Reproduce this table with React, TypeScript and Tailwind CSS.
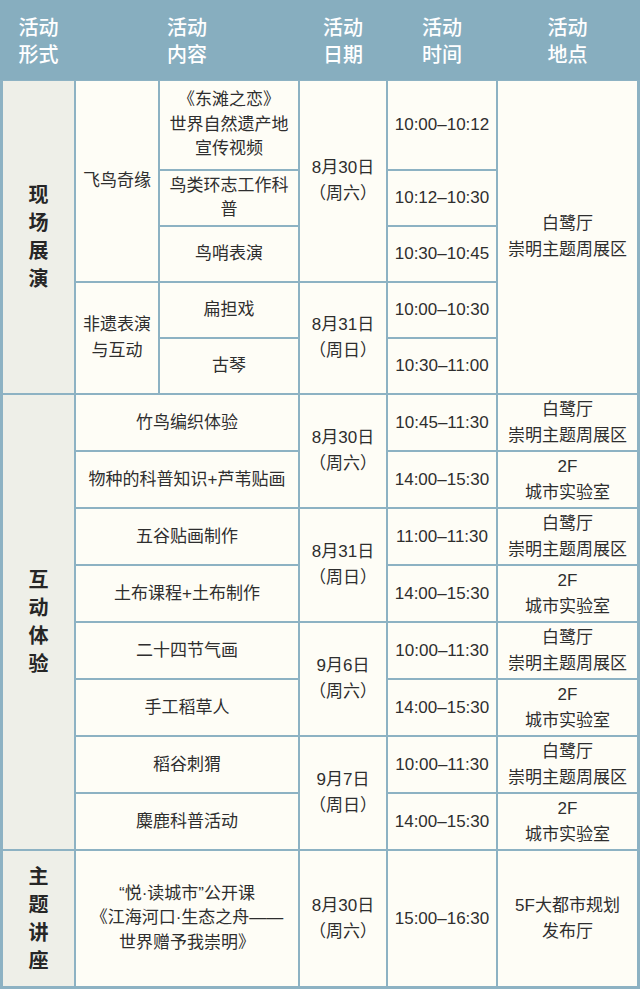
import React from "react";

type CellDef = {
  pos: string;
  lines: string[];
  kind?: "label" | "normal" | "tight";
};

const cells: CellDef[] = [
  // Section 1
  { pos: "col-start-1 row-start-1 row-span-5", lines: ["现", "场", "展", "演"], kind: "label" },
  { pos: "col-start-2 row-start-1 row-span-3", lines: ["飞鸟奇缘"] },
  { pos: "col-start-2 row-start-4 row-span-2", lines: ["非遗表演", "与互动"] },
  { pos: "col-start-3 row-start-1", lines: ["《东滩之恋》", "世界自然遗产地", "宣传视频"], kind: "tight" },
  { pos: "col-start-3 row-start-2", lines: ["鸟类环志工作科", "普"], kind: "tight" },
  { pos: "col-start-3 row-start-3", lines: ["鸟哨表演"] },
  { pos: "col-start-3 row-start-4", lines: ["扁担戏"] },
  { pos: "col-start-3 row-start-5", lines: ["古琴"] },
  { pos: "col-start-4 row-start-1 row-span-3", lines: ["8月30日", "（周六）"] },
  { pos: "col-start-4 row-start-4 row-span-2", lines: ["8月31日", "（周日）"] },
  { pos: "col-start-5 row-start-1", lines: ["10:00–10:12"] },
  { pos: "col-start-5 row-start-2", lines: ["10:12–10:30"] },
  { pos: "col-start-5 row-start-3", lines: ["10:30–10:45"] },
  { pos: "col-start-5 row-start-4", lines: ["10:00–10:30"] },
  { pos: "col-start-5 row-start-5", lines: ["10:30–11:00"] },
  { pos: "col-start-6 row-start-1 row-span-5", lines: ["白鹭厅", "崇明主题周展区"] },

  // Section 2
  { pos: "col-start-1 row-start-6 row-span-8", lines: ["互", "动", "体", "验"], kind: "label" },
  { pos: "col-start-2 col-span-2 row-start-6", lines: ["竹鸟编织体验"] },
  { pos: "col-start-2 col-span-2 row-start-7", lines: ["物种的科普知识+芦苇贴画"] },
  { pos: "col-start-2 col-span-2 row-start-8", lines: ["五谷贴画制作"] },
  { pos: "col-start-2 col-span-2 row-start-9", lines: ["土布课程+土布制作"] },
  { pos: "col-start-2 col-span-2 row-start-10", lines: ["二十四节气画"] },
  { pos: "col-start-2 col-span-2 row-start-11", lines: ["手工稻草人"] },
  { pos: "col-start-2 col-span-2 row-start-12", lines: ["稻谷刺猬"] },
  { pos: "col-start-2 col-span-2 row-start-13", lines: ["麋鹿科普活动"] },
  { pos: "col-start-4 row-start-6 row-span-2", lines: ["8月30日", "（周六）"] },
  { pos: "col-start-4 row-start-8 row-span-2", lines: ["8月31日", "（周日）"] },
  { pos: "col-start-4 row-start-10 row-span-2", lines: ["9月6日", "（周六）"] },
  { pos: "col-start-4 row-start-12 row-span-2", lines: ["9月7日", "（周日）"] },
  { pos: "col-start-5 row-start-6", lines: ["10:45–11:30"] },
  { pos: "col-start-5 row-start-7", lines: ["14:00–15:30"] },
  { pos: "col-start-5 row-start-8", lines: ["11:00–11:30"] },
  { pos: "col-start-5 row-start-9", lines: ["14:00–15:30"] },
  { pos: "col-start-5 row-start-10", lines: ["10:00–11:30"] },
  { pos: "col-start-5 row-start-11", lines: ["14:00–15:30"] },
  { pos: "col-start-5 row-start-12", lines: ["10:00–11:30"] },
  { pos: "col-start-5 row-start-13", lines: ["14:00–15:30"] },
  { pos: "col-start-6 row-start-6", lines: ["白鹭厅", "崇明主题周展区"] },
  { pos: "col-start-6 row-start-7", lines: ["2F", "城市实验室"] },
  { pos: "col-start-6 row-start-8", lines: ["白鹭厅", "崇明主题周展区"] },
  { pos: "col-start-6 row-start-9", lines: ["2F", "城市实验室"] },
  { pos: "col-start-6 row-start-10", lines: ["白鹭厅", "崇明主题周展区"] },
  { pos: "col-start-6 row-start-11", lines: ["2F", "城市实验室"] },
  { pos: "col-start-6 row-start-12", lines: ["白鹭厅", "崇明主题周展区"] },
  { pos: "col-start-6 row-start-13", lines: ["2F", "城市实验室"] },

  // Section 3
  { pos: "col-start-1 row-start-14", lines: ["主", "题", "讲", "座"], kind: "label" },
  {
    pos: "col-start-2 col-span-2 row-start-14",
    lines: ["“悦·读城市”公开课", "《江海河口·生态之舟——", "世界赠予我崇明》"],
    kind: "tight",
  },
  { pos: "col-start-4 row-start-14", lines: ["8月30日", "（周六）"] },
  { pos: "col-start-5 row-start-14", lines: ["15:00–16:30"] },
  { pos: "col-start-6 row-start-14", lines: ["5F大都市规划", "发布厅"] },
];

function Cell({ def }: { def: CellDef }) {
  if (def.kind === "label") {
    return (
      <div
        className={`${def.pos} flex flex-col items-center justify-center bg-[#eeefe8] text-[20px] leading-[28px] font-bold text-[#262626]`}
      >
        {def.lines.map((l, i) => (
          <span key={i}>{l}</span>
        ))}
      </div>
    );
  }
  const lh = def.kind === "tight" ? "leading-[24.5px]" : "leading-[26px]";
  return (
    <div
      className={`${def.pos} flex flex-col items-center justify-center bg-[#fefdf6] text-center text-[17px] ${lh} text-[#2e2e2e] whitespace-nowrap`}
    >
      {def.lines.map((l, i) => (
        <span key={i}>{l}</span>
      ))}
    </div>
  );
}

export default function App() {
  return (
    <div
      className="w-[640px] h-[989px] overflow-hidden bg-[#8db2c3]"
      style={{ fontFamily: '"Liberation Sans", "Noto Sans CJK SC", sans-serif' }}
    >
      <div className="h-[80px] bg-[#87aebf] px-[3px] pt-[4px] grid grid-cols-[71px_82px_138px_86px_108px_139px] gap-x-[2px] text-white text-[20px] leading-[27px] font-medium">
        <div className="col-start-1 flex flex-col items-center justify-center">
          <span>活动</span>
          <span>形式</span>
        </div>
        <div className="col-start-2 col-span-2 flex flex-col items-center justify-center">
          <span>活动</span>
          <span>内容</span>
        </div>
        <div className="col-start-4 flex flex-col items-center justify-center">
          <span>活动</span>
          <span>日期</span>
        </div>
        <div className="col-start-5 flex flex-col items-center justify-center">
          <span>活动</span>
          <span>时间</span>
        </div>
        <div className="col-start-6 flex flex-col items-center justify-center">
          <span>活动</span>
          <span>地点</span>
        </div>
      </div>
      <div className="grid grid-cols-[71px_82px_138px_86px_108px_139px] grid-rows-[88px_54px_54px_54px_54px_55px_55px_55px_55px_55px_55px_55px_55px_135px] gap-[2px] px-[3px] pt-[1px] pb-[3px]">
        {cells.map((c, i) => (
          <Cell key={i} def={c} />
        ))}
      </div>
    </div>
  );
}
